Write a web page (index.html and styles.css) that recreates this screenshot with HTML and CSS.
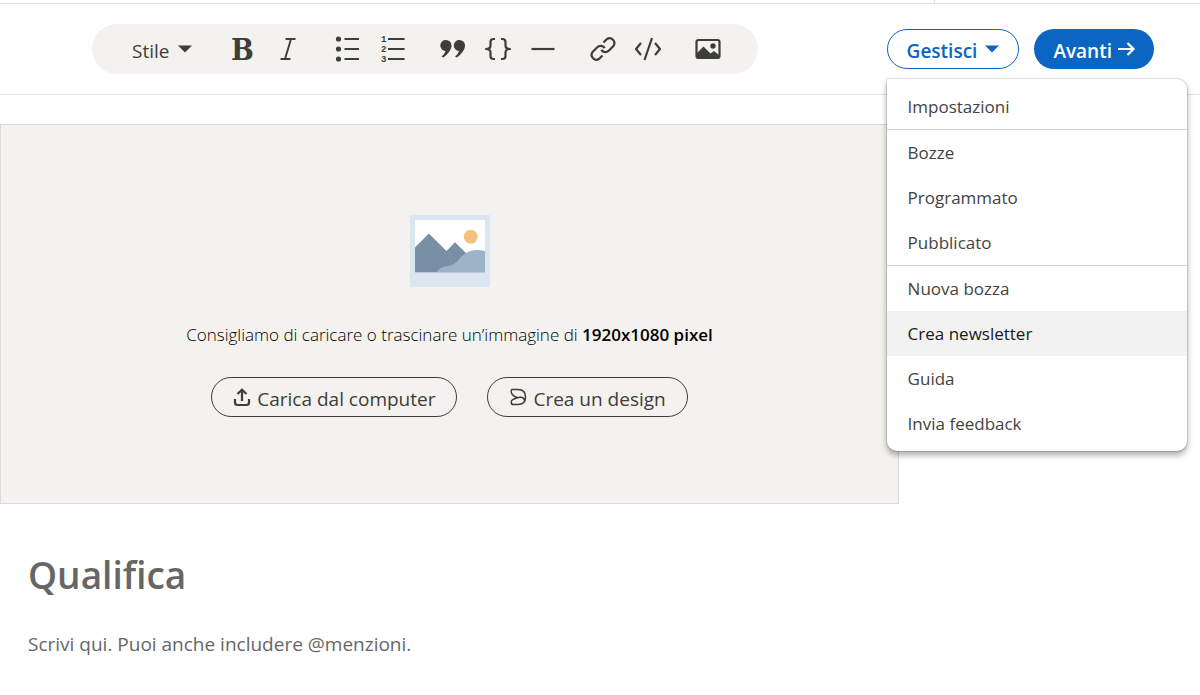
FILE: index.html
```html
<!DOCTYPE html>
<html lang="it">
<head>
<meta charset="utf-8">
<meta name="viewport" content="width=device-width, initial-scale=1">
<title>Editor articolo</title>
<link rel="stylesheet" href="styles.css">
</head>
<body>
<div class="topstrip"><div class="topstrip-main"></div><div class="topstrip-side"></div></div>
<header class="header">
  <div class="toolbar" role="toolbar" aria-label="Formattazione">
    <div class="style-picker">
      <select class="style-select" aria-label="Stile"><option>Stile</option></select>
      <svg class="caret style-caret" viewBox="0 0 14 8" aria-hidden="true"><path d="M0 0.5h14L7 7.5z"/></svg>
    </div>
    <div class="group">
      <button class="tool bold" aria-label="Grassetto">B</button>
      <button class="tool" aria-label="Corsivo"><svg class="icon" viewBox="0 0 28 28"><path class="line thin" d="M11.500 4H21.500M6.500 24H16.500M17 4L11 24"/></svg></button>
    </div>
    <div class="group">
      <button class="tool" aria-label="Elenco puntato"><svg class="icon" viewBox="0 0 28 28"><g fill="currentColor"><circle cx="4.500" cy="4" r="2.600"/><circle cx="4.500" cy="14" r="2.600"/><circle cx="4.500" cy="24" r="2.600"/></g><path class="line" d="M10.500 4H25M10.500 14H25M10.500 24H25"/></svg></button>
      <button class="tool" aria-label="Elenco numerato"><svg class="icon" viewBox="0 0 28 28"><g class="digits"><text x="2" y="7">1</text><text x="2" y="17">2</text><text x="2" y="27">3</text></g><path class="line" d="M9 4H25.500M9 14H25.500M9 24H25.500"/></svg></button>
    </div>
    <div class="group">
      <button class="tool" aria-label="Citazione"><svg class="icon" viewBox="0 0 28 28"><path fill="currentColor" d="M7 5a5.500 5.500 0 0 1 5.500 5.500c0 4.500-4 9-8 12L2.500 21.500c2-1.500 3.500-3.500 4-5.500A5.500 5.500 0 0 1 7 5zM20.500 5a5.500 5.500 0 0 1 5.500 5.500c0 4.500-4 9-8 12l-2-1c2-1.500 3.500-3.500 4-5.500A5.500 5.500 0 0 1 20.500 5z"/></svg></button>
      <button class="tool" aria-label="Blocco di codice"><svg class="icon" viewBox="0 0 28 28"><path class="line" d="M11 4H9.500Q6.500 4 6.500 7v3.500Q6.500 14 2 14Q6.500 14 6.500 17.500V21q0 3 3 3H11M17 4h1.500q3 0 3 3v3.500q0 3.500 4.500 3.500Q21.500 14 21.500 17.500V21q0 3-3 3H17"/></svg></button>
      <button class="tool" aria-label="Divisore"><svg class="icon" viewBox="0 0 28 28"><path class="line" d="M2.500 14h23"/></svg></button>
    </div>
    <div class="group">
      <button class="tool" aria-label="Link"><svg class="icon" viewBox="0 0 28 28"><path class="line" d="M14.500 7.500L18 4a4.900 4.900 0 0 1 6.700 6.700l-5 5a4.900 4.900 0 0 1-7.400-.7M13.500 20.500L10 24a4.900 4.900 0 0 1-6.700-6.700l5-5a4.900 4.900 0 0 1 7.400.7"/></svg></button>
      <button class="tool" aria-label="Codice"><svg class="icon" viewBox="0 0 28 28"><path class="line" d="M7 8L2 14l5 6M21 8l5 6-5 6M18 3l-7.500 22"/></svg></button>
    </div>
    <div class="group">
      <button class="tool" aria-label="Immagine"><svg class="icon" viewBox="0 0 28 28"><rect x="2.500" y="5" width="23" height="18" rx="2" class="line"/><circle cx="19" cy="11" r="2.700" fill="currentColor"/><path fill="currentColor" d="M3 18l6.500-6.500L15 17l1.500 1.500L20 16l5.500 4.500V23H3z"/></svg></button>
    </div>
  </div>
  <div class="actions">
    <div class="manage">
      <button class="btn btn-outline" aria-haspopup="menu" aria-expanded="true"><span class="label">Gestisci</span> <svg class="caret" viewBox="0 0 14 8" aria-hidden="true"><path d="M0 0.500h14L7 7.500z"/></svg></button>
      <div class="menu" role="menu">
        <div class="menu-group"><button class="menu-item" role="menuitem">Impostazioni</button></div>
        <div class="menu-group">
          <button class="menu-item" role="menuitem">Bozze</button>
          <button class="menu-item" role="menuitem">Programmato</button>
          <button class="menu-item" role="menuitem">Pubblicato</button>
        </div>
        <div class="menu-group">
          <button class="menu-item" role="menuitem">Nuova bozza</button>
          <button class="menu-item active" role="menuitem">Crea newsletter</button>
          <button class="menu-item" role="menuitem">Guida</button>
          <button class="menu-item" role="menuitem">Invia feedback</button>
        </div>
      </div>
    </div>
    <button class="btn btn-primary"><span class="label">Avanti</span> <svg class="arrow" viewBox="0 0 18 16" aria-hidden="true"><path d="M1 8h15M10.500 2l6 6-6 6"/></svg></button>
  </div>
</header>
<main class="editor">
  <section class="cover">
    <svg class="picture" viewBox="0 0 80 72" aria-hidden="true">
      <path fill="#dce6f1" d="M0 0h80v72H0z"/><path fill="#fff" d="M5 5h70v52H5z"/>
      <circle cx="60.700" cy="21.700" r="7" fill="#f5c27c"/>
      <path fill="#788fa5" d="M5 32.500L18.800 18.500 36.500 36 45 27.300 58 40v17H5z"/>
      <path fill="#9db3c8" d="M26.500 57c3-3 4.500-5 9-5.500 8-1 11-4 15-9C55 38 60 35 66 35c4 0 6 .5 9 1v21z"/>
      <path fill="#b9cbdd" d="M5 57h70v1H5z"/>
    </svg>
    <p class="hint">Consigliamo di caricare o trascinare un’immagine di <strong>1920x1080 pixel</strong></p>
    <div class="cover-actions">
      <button class="btn btn-dark"><svg class="small-icon" viewBox="0 0 18 18" aria-hidden="true"><path stroke-width="2.200" d="M2 11v3.500Q2 17 4.500 17h9Q16 17 16 14.500V11M9 13V2M4.500 6L9 1.800 13.500 6"/></svg> <span class="label">Carica dal computer</span></button>
      <button class="btn btn-dark"><svg class="small-icon" viewBox="0 0 18 18" aria-hidden="true"><path stroke-width="1.500" d="M2.500 1.500H9c5 0 7.500 3 7.500 7.500S14 16.500 9 16.500H4.500C1.500 16.500 1.500 12.500 4 11.500L7.500 10C10 9 15 8 15.500 12.500M2.500 1.500C1 5 4 8.500 8.500 9.500"/></svg> <span class="label">Crea un design</span></button>
    </div>
  </section>
  <div class="fields">
    <input class="title-field" type="text" placeholder="Qualifica" aria-label="Qualifica">
    <textarea class="body-field" rows="1" placeholder="Scrivi qui. Puoi anche includere @menzioni." aria-label="Testo dell’articolo"></textarea>
  </div>
</main>
</body>
</html>
```
FILE: styles.css
```css
* { box-sizing: border-box; }
body {
  margin: 0;
  background: #fff;
  color: #3d3d3a;
  font-family: "Open Sans", "Noto Sans", sans-serif;
  font-size: 18px;
}
button, select, input, textarea { font: inherit; color: inherit; border: 0; background: none; padding: 0; margin: 0; }
button { cursor: pointer; }
svg { flex: none; overflow: visible; }

.topstrip { display: flex; height: 4px; border-bottom: 1px solid #e3e3e2; }
.topstrip-main { flex: 1; border-right: 1px solid #e3e3e2; }
.topstrip-side { width: 265px; }

.header {
  display: flex;
  align-items: center;
  justify-content: space-between;
  height: 91px;
  padding: 0 46px 0 92px;
  border-bottom: 1px solid #e3e3e2;
}
.toolbar {
  display: flex;
  align-items: center;
  gap: 15px;
  height: 50px;
  padding: 0 28px 0 40px;
  border-radius: 25px;
  background: #f3f2ee;
}
.style-picker { position: relative; width: 73px; }
.style-select { display: block; width: 100%; height: 32px; padding-top: 3px; appearance: none; font-size: 19px; }
.style-caret { position: absolute; right: 13px; top: 12px; pointer-events: none; }
.caret { width: 14px; height: 8px; fill: currentColor; }
.group { display: flex; }
.tool { display: flex; align-items: center; justify-content: center; width: 45px; height: 45px; }
.icon { width: 28px; height: 28px; }
.line { fill: none; stroke: currentColor; stroke-width: 2.2; stroke-linejoin: round; }
.thin { stroke-width: 1.9; }
.digits { font: bold 9px "Liberation Mono", monospace; fill: currentColor; }
.bold { font: bold 30px/45px "DejaVu Serif Condensed", "DejaVu Serif", serif; }

.actions { display: flex; gap: 15px; }
.manage { position: relative; }
.btn {
  display: flex;
  align-items: center;
  justify-content: center;
  height: 40px;
  padding: 0 19px;
  border-radius: 20px;
  font-size: 19px;
  font-weight: 600;
  white-space: nowrap;
}
.label { padding-top: 3px; }
.btn-outline { gap: 8px; border: 1px solid #0a66c2; color: #0a66c2; }
.btn-primary { gap: 5px; background: #0a66c2; color: #fff; }
.btn-dark { gap: 6px; padding: 0 21px; border: 1px solid #3d3d3a; font-weight: 400; }
.arrow { width: 18px; height: 16px; fill: none; stroke: currentColor; stroke-width: 2.2; }
.small-icon { width: 18px; height: 18px; fill: none; stroke: currentColor; }

.menu {
  position: absolute;
  z-index: 1;
  top: 50px;
  left: 0;
  width: 300px;
  padding: 5px 0;
  border-radius: 0 10px 10px 10px;
  background: #fff;
  box-shadow: 0 0 0 1px rgba(0, 0, 0, .1), 0 4px 6px rgba(0, 0, 0, .35);
}
.menu-group + .menu-group { border-top: 1px solid #d6d6d6; }
.menu-item { display: block; width: 100%; height: 45px; padding: 0 21px; text-align: left; font-size: 17px; color: #434343; }
.menu-item.active { background: #f2f2f2; color: #191919; }

.editor { width: 75%; padding-top: 29px; }
.cover {
  display: flex;
  flex-direction: column;
  align-items: center;
  margin-right: 1px;
  padding: 90px 20px 86px;
  border: 1px solid #dadad6;
  background: #f3f2ee;
}
.picture { width: 80px; height: 72px; }
.hint { margin: 36px 0 30px; font-size: 17px; line-height: 24px; font-weight: 300; color: #000; }
.hint strong { font-weight: 600; }
.cover-actions { display: flex; gap: 30px; }

.fields { display: flex; flex-direction: column; gap: 26px; padding: 42px 28px 30px; }
.title-field { height: 56px; font-size: 37px; font-weight: 600; }
.body-field { height: 32px; resize: none; overflow: hidden; font-size: 19px; line-height: 32px; }
.title-field::placeholder, .body-field::placeholder { color: #666; opacity: 1; }
```
